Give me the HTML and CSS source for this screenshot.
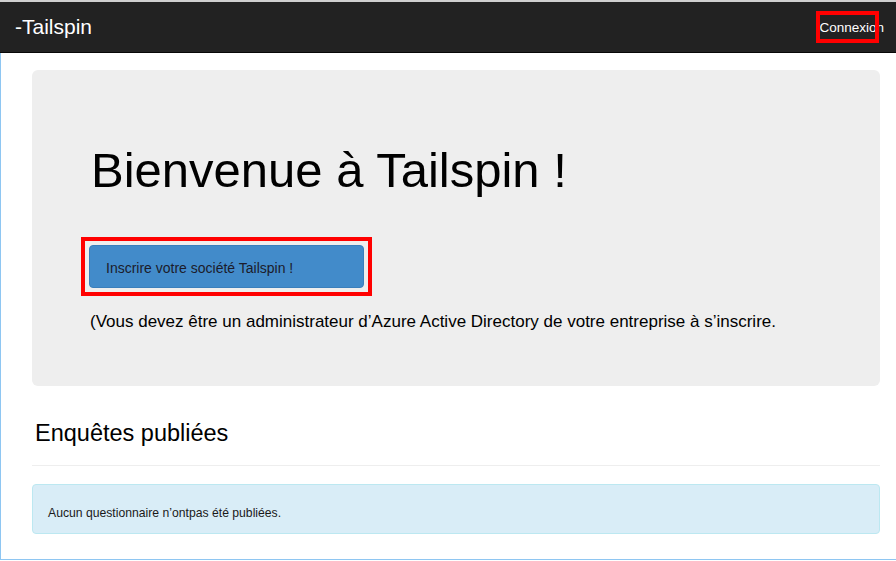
FILE: index.html
```html
<!DOCTYPE html>
<html lang="fr">
<head>
<meta charset="utf-8">
<title>Tailspin</title>
<link rel="stylesheet" href="styles.css">
</head>
<body>
<div class="frame">
  <header class="navbar">
    <a class="brand" href="#">-Tailspin</a>
    <a class="login" href="#">Connexion<span class="mark"></span></a>
  </header>
  <main class="content">
    <section class="jumbotron">
      <h1 class="title">Bienvenue à Tailspin !</h1>
      <div class="highlight">
        <button class="btn-primary" type="button">Inscrire votre société Tailspin !</button>
      </div>
      <p class="lead">(Vous devez être un administrateur d’Azure Active Directory de votre entreprise à s’inscrire.</p>
    </section>
    <h2 class="section-title">Enquêtes publiées</h2>
    <hr class="divider">
    <div class="alert">Aucun questionnaire n’ontpas été publiées.</div>
  </main>
</div>
</body>
</html>
```

FILE: styles.css
```css
html, body {
  margin: 0;
  padding: 0;
  background: #ffffff;
}
body {
  font-family: "Liberation Sans", Arial, sans-serif;
  color: #000;
  width: 896px;
  height: 561px;
  overflow: hidden;
}
.frame {
  height: 560px;
  border-bottom: 1px solid #8ec6f2;
  border-left: 1px solid #8ec6f2;
  box-sizing: border-box;
}
.navbar {
  height: 53px;
  margin-left: -1px;
  box-sizing: border-box;
  background: #222222;
  border-top: 2px solid #cfcfcf;
  border-bottom: 1px solid #080808;
  display: flex;
  align-items: center;
  justify-content: space-between;
  padding: 0 12px 0 15px;
}
.brand {
  color: #fff;
  text-decoration: none;
  font-size: 21px;
  margin-top: -1px;
}
.login {
  position: relative;
  display: block;
  color: #fff;
  text-decoration: none;
  font-size: 13.5px;
  line-height: 16px;
  margin-top: 2px;
}
.mark {
  position: absolute;
  right: 5px;
  top: -9px;
  width: 63px;
  height: 32px;
  box-sizing: border-box;
  border: 4px solid #ff0000;
}
.content {
  margin: 0 16px 0 31px;
  padding-top: 17px;
}
.jumbotron {
  background: #eeeeee;
  border-radius: 6px;
  padding: 74px 40px 52px 57px;
}
.title {
  margin: 0 0 0 2px;
  font-size: 49px;
  font-weight: normal;
  line-height: 52px;
}
.highlight {
  display: inline-block;
  border: 4px solid #ff0000;
  padding: 4px;
  margin: 41px 0 0 -8px;
}
.btn-primary {
  display: block;
  width: 275px;
  height: 43px;
  background: #428bca;
  border: 1px solid #3a7fbc;
  border-radius: 4px;
  color: #1c1c2a;
  font-family: "Liberation Sans", Arial, sans-serif;
  font-size: 14px;
  text-align: left;
  padding: 2px 0 0 16px;
}
.lead {
  margin: 14px 0 0 1px;
  font-size: 17px;
  line-height: 24px;
}
.section-title {
  margin: 33px 0 0 3px;
  font-size: 23.5px;
  font-weight: normal;
  line-height: 28px;
}
.divider {
  margin: 18px 0 0;
  border: 0;
  border-top: 1px solid #eeeeee;
}
.alert {
  margin-top: 18px;
  height: 50px;
  box-sizing: border-box;
  background: #d9edf7;
  border: 1px solid #bce8f1;
  border-radius: 4px;
  padding: 21px 15px 0;
  font-size: 12.2px;
  color: #1a1a1a;
}
```
